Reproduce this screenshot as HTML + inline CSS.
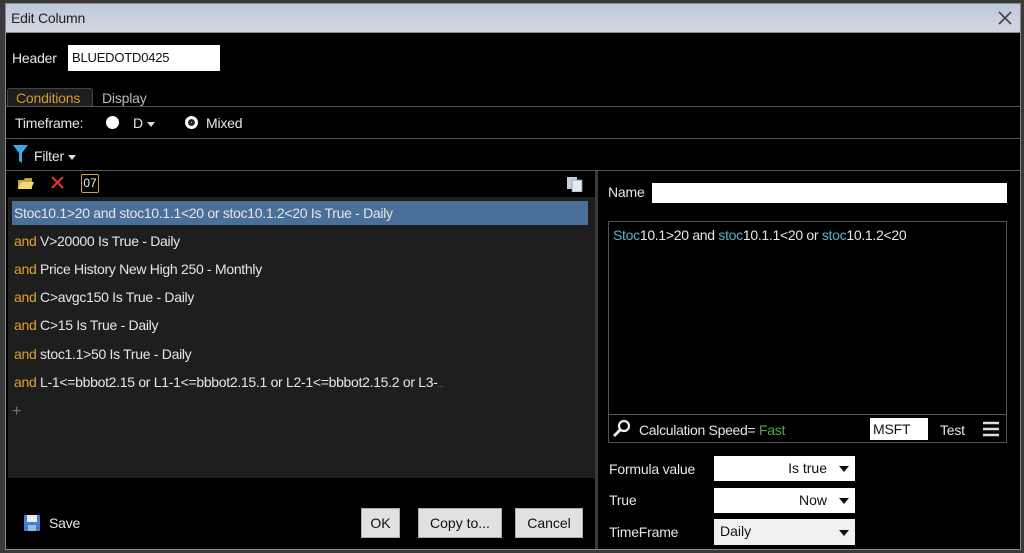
<!DOCTYPE html>
<html><head><meta charset="utf-8"><style>
*{box-sizing:border-box;margin:0;padding:0}
body{width:1024px;height:553px;background:#3a3a3a;position:relative;overflow:hidden;font-family:"Liberation Sans",sans-serif;font-size:13px;color:#e6e6e6}
.a{position:absolute}
.t{white-space:nowrap;letter-spacing:-0.2px}
.l{font-size:14px;letter-spacing:-0.3px}
.or{color:#e0a22a}
.inp{background:#fff;color:#111}
.btn{background:#e1e1e1;border:1px solid #adadad;color:#111;text-align:center;line-height:28px;font-size:14px}
.dd{background:#fff;color:#111;font-size:14px;line-height:25px}
.tri{display:inline-block;width:0;height:0;border-left:5px solid transparent;border-right:5px solid transparent;border-top:6px solid #111}
.trw{display:inline-block;width:0;height:0;border-left:4px solid transparent;border-right:4px solid transparent;border-top:5px solid #ddd;vertical-align:middle}
.tl{color:#5eb0c8}
</style></head><body>
<div class="a" style="left:5px;top:3px;width:1016px;height:547px;background:#000;border:1px solid #888"></div>
<div class="a" style="left:6px;top:4px;width:1014px;height:29px;background:linear-gradient(#bfc9dd,#d2d6de);border-bottom:1px solid #8c8c8c"></div>
<div class="a t" style="left:11px;top:10px;color:#222;font-size:14px">Edit Column</div>
<svg class="a" style="left:998px;top:11px" width="14" height="14"><path d="M1 1L13 13M13 1L1 13" stroke="#444" stroke-width="1.6"/></svg>
<div class="a t" style="left:12px;top:50px;font-size:14px">Header</div>
<div class="a inp t" style="left:68px;top:45px;width:152px;height:26px;line-height:26px;padding-left:4px;font-size:13px">BLUEDOTD0425</div>
<div class="a" style="left:7px;top:88px;width:86px;height:19px;background:#1e1e1e;border:1px solid #444;border-bottom:none;border-radius:3px 3px 0 0"></div>
<div class="a t" style="left:16px;top:90px;color:#d49a2a;font-size:14px">Conditions</div>
<div class="a t" style="left:102px;top:90px;color:#bbb;font-size:14px">Display</div>
<div class="a" style="left:6px;top:106px;width:1014px;height:1px;background:#555"></div>
<div class="a t" style="left:15px;top:115px;font-size:14px">Timeframe:</div>
<div class="a" style="left:106px;top:116px;width:13px;height:13px;border-radius:50%;background:#fff"></div>
<div class="a t" style="left:133px;top:115px;font-size:14px">D <span class="trw"></span></div>
<div class="a" style="left:185px;top:116px;width:13px;height:13px;border-radius:50%;background:#fff;border:3.5px solid #fff;box-shadow:inset 0 0 0 3px #222"></div>
<div class="a t" style="left:206px;top:115px;font-size:14px">Mixed</div>
<div class="a" style="left:6px;top:138px;width:1014px;height:1px;background:#555"></div>
<svg class="a" style="left:13px;top:145px" width="16" height="18"><path d="M0 0H15L9 8V18L6 16V8Z" fill="#3ba8e8"/></svg>
<div class="a t" style="left:34px;top:148px;font-size:14px">Filter <span class="trw"></span></div>
<div class="a" style="left:6px;top:170px;width:1014px;height:1px;background:#555"></div>
<svg class="a" style="left:17px;top:175px" width="18" height="16"><path d="M1 5H7L8 3H15V14H1Z" fill="#c9a63a"/><path d="M1 14L4 7H17L14 14Z" fill="#f0d778"/></svg>
<svg class="a" style="left:50px;top:175px" width="15" height="15"><path d="M2 2L13 13M13 2L2 13" stroke="#e0352a" stroke-width="2.2"/></svg>
<div class="a" style="left:81px;top:174px;width:18px;height:19px;border:1.5px solid #c9a63a;border-radius:2px;color:#eee;font-size:12px;line-height:16px;text-align:center">07</div>
<svg class="a" style="left:566px;top:175px" width="17" height="17"><rect x="1" y="2" width="10" height="12" fill="#c8d0e0"/><rect x="6" y="5" width="10" height="12" fill="#e4e8f0" stroke="#8a94a8" stroke-width=".8"/></svg>
<div class="a" style="left:8px;top:197px;width:587px;height:281px;background:#1e1e1e"></div>
<div class="a" style="left:595px;top:171px;width:3px;height:378px;background:#3a3a3a"></div>
<div class="a" style="left:12px;top:201px;width:576px;height:24px;background:#4a6f98"></div>
<div class="a t l" style="left:14px;top:205px">Stoc10.1&gt;20 and stoc10.1.1&lt;20 or stoc10.1.2&lt;20 Is True - Daily</div>
<div class="a t l" style="left:14px;top:233px"><span class="or">and</span> V&gt;20000 Is True - Daily</div>
<div class="a t l" style="left:14px;top:261px"><span class="or">and</span> Price History New High 250 - Monthly</div>
<div class="a t l" style="left:14px;top:289px"><span class="or">and</span> C&gt;avgc150 Is True - Daily</div>
<div class="a t l" style="left:14px;top:317px"><span class="or">and</span> C&gt;15 Is True - Daily</div>
<div class="a t l" style="left:14px;top:346px"><span class="or">and</span> stoc1.1&gt;50 Is True - Daily</div>
<div class="a t l" style="left:14px;top:374px"><span class="or">and</span> L-1&lt;=bbbot2.15 or L1-1&lt;=bbbot2.15.1 or L2-1&lt;=bbbot2.15.2 or L3-<span style="font-size:8px;color:#888">...</span></div>
<div class="a" style="left:12px;top:403px;color:#777;font-size:16px">+</div>
<svg class="a" style="left:24px;top:515px" width="16" height="16"><rect x="0" y="0" width="16" height="16" rx="1" fill="#3f7fd8"/><rect x="3" y="0" width="10" height="7" fill="#e8eef8"/><rect x="4" y="10" width="8" height="6" fill="#9fb8dc"/></svg>
<div class="a t" style="left:49px;top:515px;font-size:14px">Save</div>
<div class="a btn" style="left:361px;top:508px;width:39px;height:30px">OK</div>
<div class="a btn" style="left:418px;top:508px;width:84px;height:30px">Copy to...</div>
<div class="a btn" style="left:515px;top:508px;width:68px;height:30px">Cancel</div>
<div class="a t" style="left:608px;top:184px;font-size:14px">Name</div>
<div class="a inp" style="left:652px;top:183px;width:355px;height:20px"></div>
<div class="a" style="left:608px;top:221px;width:399px;height:222px;border:1px solid #555"></div>
<div class="a t l" style="left:613px;top:227px"><span class="tl">Stoc</span>10.1&gt;20 and <span class="tl">stoc</span>10.1.1&lt;20 or <span class="tl">stoc</span>10.1.2&lt;20</div>
<div class="a" style="left:609px;top:414px;width:397px;height:1px;background:#555"></div>
<svg class="a" style="left:612px;top:419px" width="20" height="20"><circle cx="12" cy="7" r="5" fill="none" stroke="#eee" stroke-width="2.2"/><path d="M8.5 10.5L2 17" stroke="#eee" stroke-width="2.8"/></svg>
<div class="a t" style="left:639px;top:422px;font-size:14px;letter-spacing:-0.3px">Calculation Speed= <span style="color:#4caa4a">Fast</span></div>
<div class="a inp t" style="left:870px;top:418px;width:58px;height:22px;line-height:22px;padding-left:3px;font-size:14px">MSFT</div>
<div class="a t" style="left:940px;top:422px;font-size:14px">Test</div>
<svg class="a" style="left:983px;top:421px" width="16" height="16"><path d="M0 2H16M0 8H16M0 14H16" stroke="#ddd" stroke-width="2.6"/></svg>
<div class="a t" style="left:609px;top:461px;font-size:14px">Formula value</div>
<div class="a t" style="left:609px;top:492px;font-size:14px">True</div>
<div class="a t" style="left:609px;top:524px;font-size:14px">TimeFrame</div>
<div class="a dd" style="left:714px;top:456px;width:141px;height:25px;text-align:right;padding-right:28px">Is true</div>
<div class="a dd" style="left:714px;top:488px;width:141px;height:25px;text-align:right;padding-right:28px">Now</div>
<div class="a dd" style="left:714px;top:519px;width:141px;height:26px;background:#f0f0f0;padding-left:6px">Daily</div>
<div class="a tri" style="left:839px;top:466px"></div>
<div class="a tri" style="left:839px;top:498px"></div>
<div class="a tri" style="left:839px;top:530px"></div>
</body></html>
